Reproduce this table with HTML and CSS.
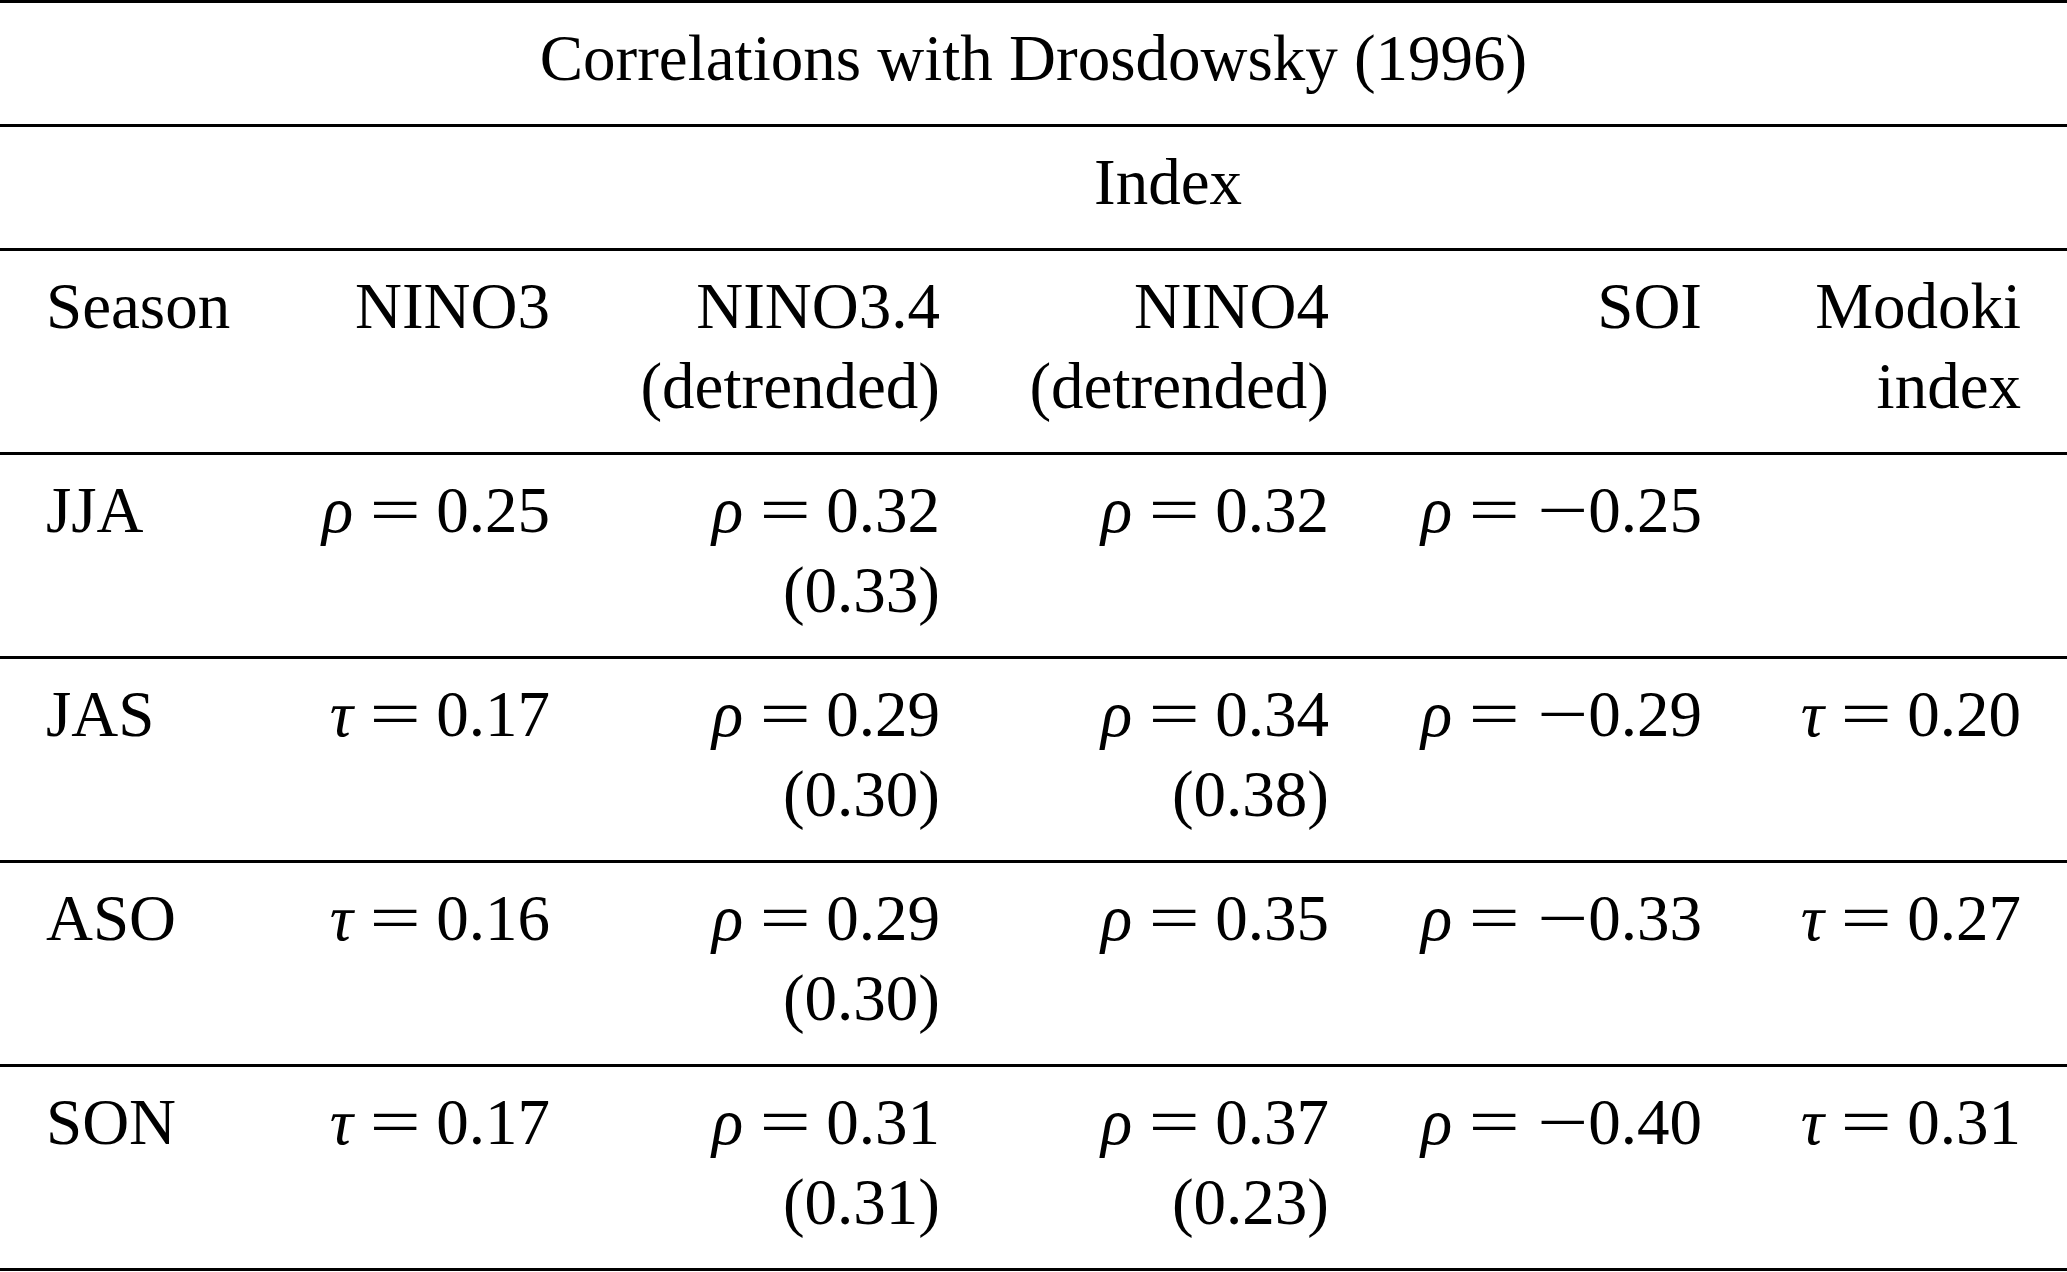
FILE: index.html
```html
<!DOCTYPE html>
<html>
<head>
<meta charset="utf-8">
<link rel="stylesheet" href="styles.css">
</head>
<body>
<div class="tbl">
  <div class="title">Correlations with Drosdowsky (1996)</div>
  <div class="row"><div class="index">Index</div></div>
  <div class="row">
    <div class="c first">Season</div>
    <div class="c">NINO3</div>
    <div class="c">NINO3.4<br>(detrended)</div>
    <div class="c">NINO4<br>(detrended)</div>
    <div class="c">SOI</div>
    <div class="c">Modoki<br>index</div>
  </div>
  <div class="row">
    <div class="c first">JJA</div>
    <div class="c"><i class="v">ρ</i><span class="eq">=</span>0.25</div>
    <div class="c"><i class="v">ρ</i><span class="eq">=</span>0.32<br>(0.33)</div>
    <div class="c"><i class="v">ρ</i><span class="eq">=</span>0.32</div>
    <div class="c"><i class="v">ρ</i><span class="eq">=</span><span class="neg">−</span>0.25</div>
    <div class="c"></div>
  </div>
  <div class="row">
    <div class="c first">JAS</div>
    <div class="c"><i class="v">τ</i><span class="eq">=</span>0.17</div>
    <div class="c"><i class="v">ρ</i><span class="eq">=</span>0.29<br>(0.30)</div>
    <div class="c"><i class="v">ρ</i><span class="eq">=</span>0.34<br>(0.38)</div>
    <div class="c"><i class="v">ρ</i><span class="eq">=</span><span class="neg">−</span>0.29</div>
    <div class="c"><i class="v">τ</i><span class="eq">=</span>0.20</div>
  </div>
  <div class="row">
    <div class="c first">ASO</div>
    <div class="c"><i class="v">τ</i><span class="eq">=</span>0.16</div>
    <div class="c"><i class="v">ρ</i><span class="eq">=</span>0.29<br>(0.30)</div>
    <div class="c"><i class="v">ρ</i><span class="eq">=</span>0.35</div>
    <div class="c"><i class="v">ρ</i><span class="eq">=</span><span class="neg">−</span>0.33</div>
    <div class="c"><i class="v">τ</i><span class="eq">=</span>0.27</div>
  </div>
  <div class="row">
    <div class="c first">SON</div>
    <div class="c"><i class="v">τ</i><span class="eq">=</span>0.17</div>
    <div class="c"><i class="v">ρ</i><span class="eq">=</span>0.31<br>(0.31)</div>
    <div class="c"><i class="v">ρ</i><span class="eq">=</span>0.37<br>(0.23)</div>
    <div class="c"><i class="v">ρ</i><span class="eq">=</span><span class="neg">−</span>0.40</div>
    <div class="c"><i class="v">τ</i><span class="eq">=</span>0.31</div>
  </div>
</div>
</body>
</html>
```
FILE: styles.css
```css
html, body {
  margin: 0;
  padding: 0;
  background: #fff;
}
body {
  font-family: "Liberation Serif", "Times New Roman", serif;
  font-size: 65px;
  line-height: 80px;
  color: #000;
}
.tbl {
  width: 2067px;
  border-top: 3px solid #000;
}
.title {
  text-align: center;
  padding: 15px 0 26px;
  border-bottom: 3px solid #000;
}
.row {
  display: grid;
  grid-template-columns: 254px 250px 390px 389px 373px 319px;
  padding: 15px 46px 26px;
  border-bottom: 3px solid #000;
}
.index {
  grid-column: 2 / -1;
  text-align: center;
  padding-left: 15px;
}
.c {
  text-align: right;
  white-space: nowrap;
}
.c.first {
  text-align: left;
}
.v {
  font-style: italic;
}
.eq {
  display: inline-block;
  width: 0.62em;
  text-align: center;
  margin: 0 0.33em;
  transform: scaleX(1.4);
}
.neg {
  display: inline-block;
  margin-left: 0.25em;
  transform: scaleX(1.4);
  transform-origin: right center;
}
```
